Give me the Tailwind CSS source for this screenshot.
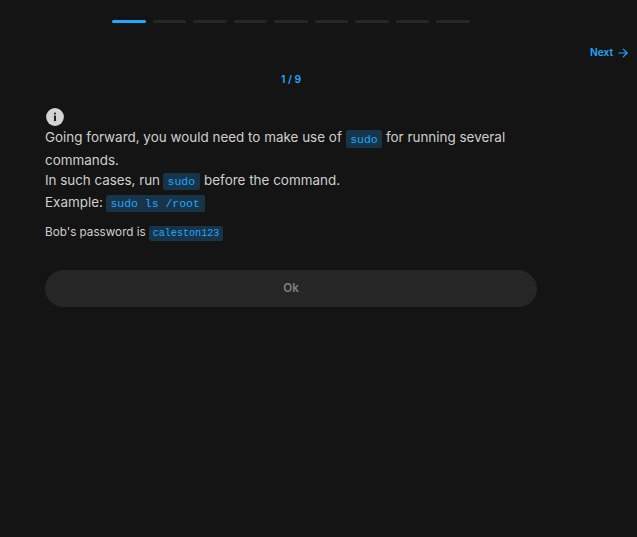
<!DOCTYPE html>
<html lang="en">
<head>
<meta charset="utf-8">
<title>Task</title>
<script src="https://cdn.jsdelivr.net/npm/@tailwindcss/browser@4"></script>
</head>
<body class="h-[537px] w-[637px] overflow-hidden bg-[#141414] font-['Inter',sans-serif] text-[#cfcfcf]">
<div class="ml-[112px] grid w-[358px] grid-cols-9 gap-[6.6px] pt-5">
<div class="h-[3px] rounded-full bg-[#1fa8ff]"></div>
<div class="h-[3px] rounded-full bg-[#262626]"></div>
<div class="h-[3px] rounded-full bg-[#262626]"></div>
<div class="h-[3px] rounded-full bg-[#262626]"></div>
<div class="h-[3px] rounded-full bg-[#262626]"></div>
<div class="h-[3px] rounded-full bg-[#262626]"></div>
<div class="h-[3px] rounded-full bg-[#262626]"></div>
<div class="h-[3px] rounded-full bg-[#262626]"></div>
<div class="h-[3px] rounded-full bg-[#262626]"></div>
</div>
<div class="mt-[22px] flex h-4 items-center justify-end gap-[5px] pr-[9px] text-[10.2px] font-semibold text-[#1fa8ff]">
<span>Next</span>
<svg class="h-[10px] w-[10px]" viewBox="0 0 10 10" fill="none" stroke="currentColor" stroke-width="1.2"><path d="M0.5 5H9M5 0.8L9.2 5L5 9.2"/></svg>
</div>
<main class="ml-[45px] w-[492px]">
<div class="mt-[11px] text-center text-[10.4px] leading-4 font-semibold text-[#1fa8ff]">1 / 9</div>
<svg class="mt-[20px] ml-px block h-[18px] w-[18px]" viewBox="0 0 18 18"><circle cx="9" cy="9" r="8.9" fill="#d4d4d4"/><rect x="8" y="4.7" width="2" height="1.6" fill="#202020"/><path d="M7.4 8H9V12.8M7.2 12.8H10.8" fill="none" stroke="#8a8a8a" stroke-width="0.6"/><rect x="8" y="7.6" width="2" height="5.4" fill="#202020"/></svg>
<div class="text-[13.45px] leading-[22px] whitespace-nowrap">
<p class="h-[23px]">Going forward, you would need to make use of <code class="rounded-[2px] bg-[#173448] px-[4.5px] py-[2.5px] font-['Liberation_Mono',monospace] text-[11.475px] text-[#1fa8ff]">sudo</code> for running several</p>
<p class="h-[20px]">commands.</p>
<p class="h-[22px]"><span class="tracking-[-0.04px]">In such cases, run </span><code class="-ml-[0.8px] rounded-[2px] bg-[#173448] px-[4.6px] py-[2px] font-['Liberation_Mono',monospace] text-[11.475px] text-[#1fa8ff]">sudo</code> <span class="ml-[0.6px]">before the command.</span></p>
<p class="h-[22px]">Example: <code class="-ml-px rounded-[2px] bg-[#173448] px-[4.7px] py-[2px] font-['Liberation_Mono',monospace] text-[11.475px] text-[#1fa8ff]">sudo ls /root</code></p>
</div>
<p class="mt-[10px] h-[18px] text-[11.7px] leading-[18px] whitespace-nowrap">Bob's password is <code class="rounded-[2px] bg-[#173448] px-[3.6px] py-[2px] font-['Liberation_Mono',monospace] text-[10.1px] text-[#1fa8ff]">caleston123</code></p>
<button class="mt-[29px] block h-[37px] w-full rounded-full bg-[#262626] pt-px text-[11.7px] font-semibold text-[#808080]">Ok</button>
</main>
</body>
</html>
